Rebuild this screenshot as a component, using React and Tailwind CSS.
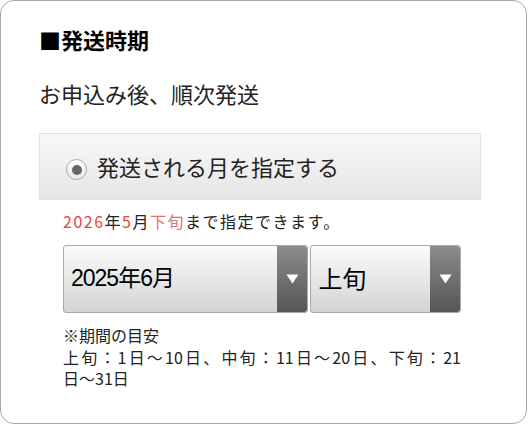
import React from "react";

function Arrow() {
  return (
    <div className="flex w-[30px] shrink-0 items-center justify-center rounded-r-[3px] bg-gradient-to-b from-[#8c8c8c] to-[#565656]">
      <svg width="13" height="10" viewBox="0 0 13 10">
        <polygon points="0.5,0.5 12.5,0.5 6.5,9.5" fill="#ffffff" />
      </svg>
    </div>
  );
}

function SelectBox({ label, width, textClass }) {
  return (
    <div
      className={`flex h-[68px] ${width} overflow-hidden rounded-[3px] border border-[#a9a9a9] bg-gradient-to-b from-[#fbfbfb] to-[#d4d4d4]`}
    >
      <div className={`flex flex-1 items-center pb-[2px] pl-[7px] text-black ${textClass}`}>
        {label}
      </div>
      <Arrow />
    </div>
  );
}

export default function App() {
  return (
    <div className="h-[424px] w-[528px] bg-white font-['Noto_Sans_CJK_JP',sans-serif]">
      <div className="h-[424px] w-[527px] rounded-[14px] border border-[#a8a8a8] pl-[38px] pt-[23px]">
        <div className="text-[22px] font-bold leading-[30px] text-black">
          ■発送時期
        </div>
        <div className="mt-[24px] text-[22px] leading-[30px] text-[#222]">
          お申込み後、順次発送
        </div>

        <div className="mt-[25px] flex h-[67px] w-[442px] items-center border border-[#e2e2e2] bg-gradient-to-b from-[#f8f8f8] to-[#e6e6e6] pl-[26px]">
          <div className="mt-[6px] flex h-[21px] w-[21px] items-center justify-center rounded-full border border-[#a5a5a5] bg-gradient-to-b from-white to-[#e9e9e9]">
            <div className="h-[10px] w-[10px] rounded-full bg-[#666]" />
          </div>
          <div className="ml-[10px] pb-[1px] text-[22px] leading-[30px] text-[#222]">
            発送される月を指定する
          </div>
        </div>

        <div className="ml-[24px] w-[398px]">
          <div className="mt-[11px] text-[16px] leading-[20px] tracking-[1.5px] text-[#222]">
            <span className="text-[#e8453c]">2026</span>年
            <span className="text-[#e8453c]">5</span>月
            <span className="text-[#e0706a]">下旬</span>まで指定できます。
          </div>

          <div className="mt-[14px] flex gap-[2px]">
            <SelectBox
              label="2025年6月"
              width="w-[246px]"
              textClass="text-[23px] tracking-[-1px] font-['Liberation_Sans','Noto_Sans_CJK_JP',sans-serif]"
            />
            <SelectBox
              label="上旬"
              width="w-[151px]"
              textClass="text-[24px]"
            />
          </div>

          <div className="mt-[12px] text-[16px] leading-[21.5px] text-[#222]">
            <div>※期間の目安</div>
            <div className="text-justify [text-align-last:justify]">
              上旬：1日～10日、中旬：11日～20日、下旬：21
            </div>
            <div>日～31日</div>
          </div>
        </div>
      </div>
    </div>
  );
}
